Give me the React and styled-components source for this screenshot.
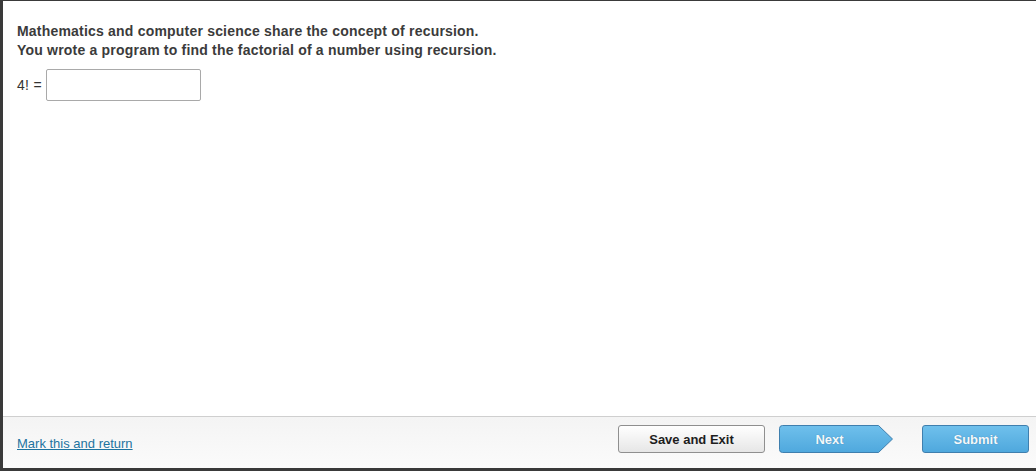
import React from 'react';
import styled, { createGlobalStyle } from 'styled-components';

const Global = createGlobalStyle`
  html, body { margin: 0; padding: 0; background: #fff; }
  body { font-family: "Liberation Sans", Arial, sans-serif; }
`;

const Frame = styled.div`
  box-sizing: border-box;
  width: 1036px;
  height: 471px;
  border-top: 1px solid #3a3a3a;
  border-left: 3px solid #3a3a3a;
  border-bottom: 3px solid #3a3a3a;
  display: flex;
  flex-direction: column;
  background: #fff;
`;

const Content = styled.div`
  flex: 1;
  padding: 21px 14px 0 14px;
  color: #333;
`;

const Prompt = styled.p`
  margin: 0;
  font-size: 14px;
  letter-spacing: 0.2px;
  font-weight: bold;
  line-height: 19px;
  color: #3b3b3b;
`;

const AnswerRow = styled.div`
  display: flex;
  align-items: center;
  gap: 4px;
  margin-top: 9px;
  font-size: 14px;
  letter-spacing: 0.3px;
  color: #333;
`;

const Answer = styled.input`
  box-sizing: border-box;
  width: 155px;
  height: 32px;
  border: 1px solid #a9a9a9;
  border-radius: 2px;
  background: #fff;
  margin: 0;
  outline: none;
`;

const Footer = styled.div`
  box-sizing: border-box;
  height: 52px;
  border-top: 1px solid #cfcfcf;
  background: linear-gradient(#f4f4f4, #fbfbfb);
  display: flex;
  align-items: flex-start;
  padding: 8px 7px 0 14px;
`;

const MarkLink = styled.a`
  font-size: 13px;
  line-height: 15px;
  color: #1d74a0;
  text-decoration: underline;
  margin-top: 11px;
  cursor: pointer;
`;

const Spacer = styled.div`
  flex: 1;
`;

const Button = styled.button`
  box-sizing: border-box;
  height: 28px;
  width: ${(p) => p.w}px;
  margin-left: ${(p) => p.ml || 0}px;
  border-radius: 3px;
  font-family: "Liberation Sans", Arial, sans-serif;
  font-size: 13px;
  font-weight: bold;
  padding: 0;
  cursor: pointer;
`;

const GreyButton = styled(Button)`
  border: 1px solid #8f8f8f;
  background: linear-gradient(#ffffff, #e6e6e6);
  color: #1e1e1e;
`;

const BlueButton = styled(Button)`
  border: 1px solid #3f7fae;
  background: linear-gradient(#6fc0ec, #4fa8dd);
  color: #f4f9fc;
  text-shadow: 0 0 1px #3a7aa5;
`;

const ArrowButton = styled.button`
  position: relative;
  width: 115px;
  height: 28px;
  margin-left: 14px;
  padding: 0 14px 0 0;
  border: none;
  background: transparent;
  font-family: "Liberation Sans", Arial, sans-serif;
  font-size: 13px;
  font-weight: bold;
  color: #f4f9fc;
  text-shadow: 0 0 1px #3a7aa5;
  cursor: pointer;

  svg {
    position: absolute;
    left: 0;
    top: 0;
  }
  span {
    position: relative;
  }
`;

export default function App() {
  return (
    <>
      <Global />
      <Frame>
        <Content>
          <Prompt>Mathematics and computer science share the concept of recursion.</Prompt>
          <Prompt>You wrote a program to find the factorial of a number using recursion.</Prompt>
          <AnswerRow>
            <span>4! =</span>
            <Answer type="text" />
          </AnswerRow>
        </Content>
        <Footer>
          <MarkLink>Mark this and return</MarkLink>
          <Spacer />
          <GreyButton w={147}>Save and Exit</GreyButton>
          <ArrowButton>
            <svg width="115" height="28" viewBox="0 0 115 28">
              <defs>
                <linearGradient id="ng" x1="0" y1="0" x2="0" y2="1">
                  <stop offset="0" stopColor="#6fc0ec" />
                  <stop offset="1" stopColor="#4fa8dd" />
                </linearGradient>
              </defs>
              <path
                d="M3.5 0.5 H99.5 L113.5 14 L99.5 27.5 H3.5 Q0.5 27.5 0.5 24.5 V3.5 Q0.5 0.5 3.5 0.5 Z"
                fill="url(#ng)"
                stroke="#3f7fae"
                strokeWidth="1"
              />
            </svg>
            <span>Next</span>
          </ArrowButton>
          <BlueButton w={107} ml={28}>Submit</BlueButton>
        </Footer>
      </Frame>
    </>
  );
}
